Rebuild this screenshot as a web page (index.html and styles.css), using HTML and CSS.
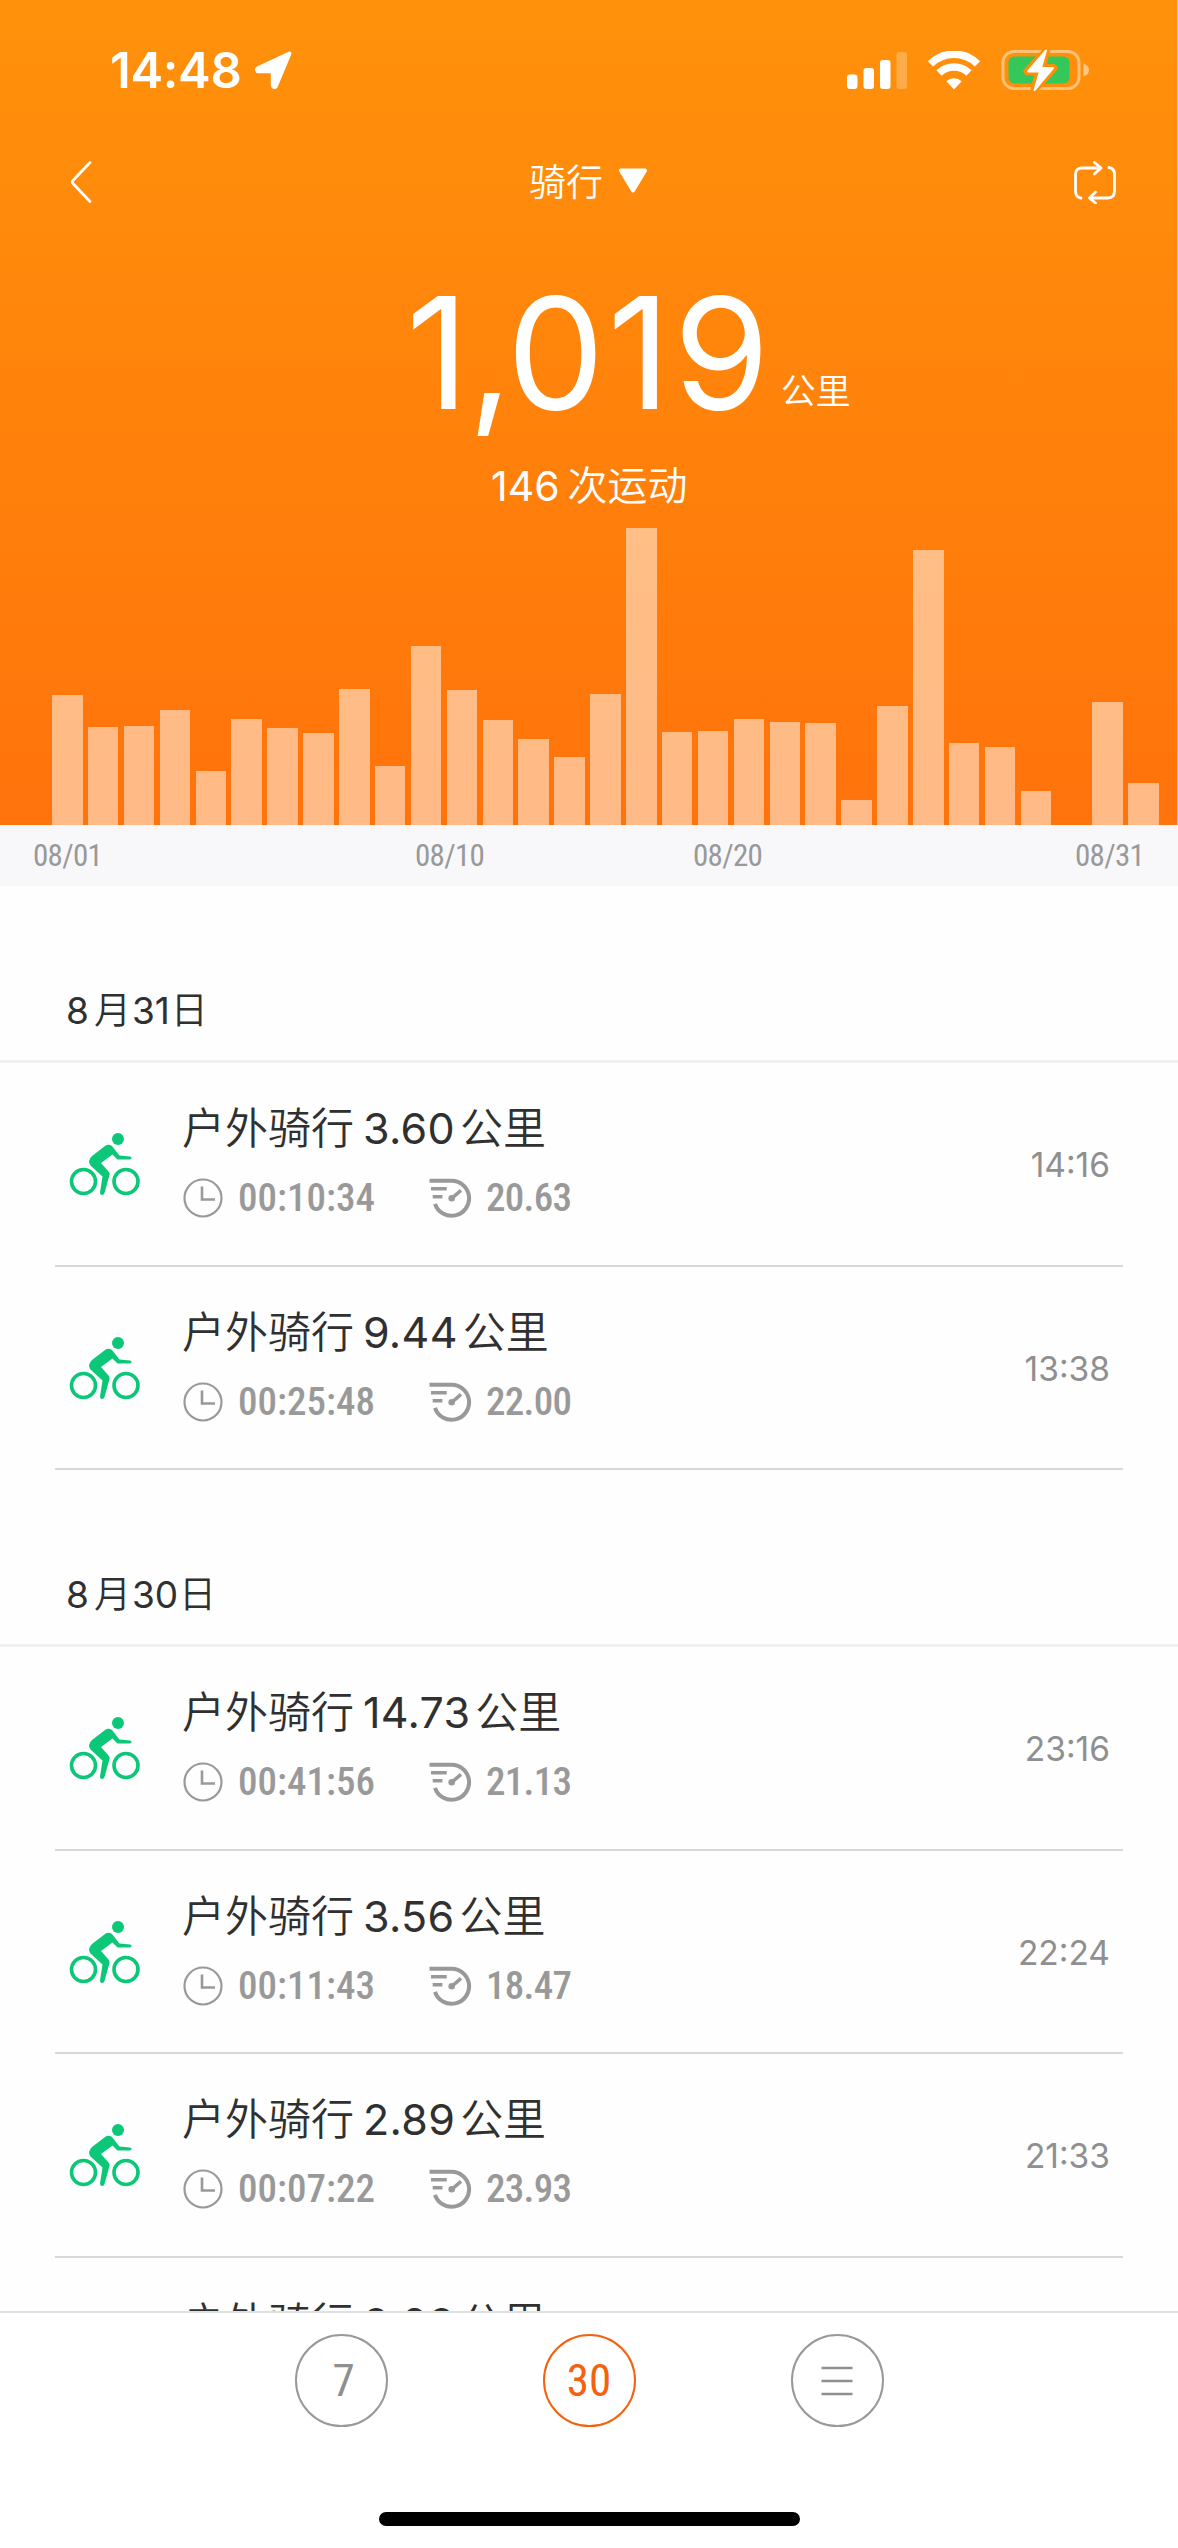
FILE: index.html
```html
<!DOCTYPE html>
<html lang="zh-CN">
<head>
<meta charset="utf-8">
<title>骑行</title>
<link rel="stylesheet" href="styles.css">
</head>
<body>
<div class="phone">
  <header class="hero">
    <div class="status">
      <span class="clock">14:48</span>
      <svg class="loc" width="40" height="40" viewBox="0 0 40 40"><path d="M35.5 3.5 3.8 18.2a1.6 1.6 0 0 0 .7 3h14.3v14.3a1.6 1.6 0 0 0 3 .7Z" fill="#fff" stroke="#fff" stroke-width="4" stroke-linejoin="round"/></svg>
      <span class="grow"></span>
      <svg class="signal" width="61" height="38" viewBox="0 0 61 38" fill="#fff"><rect x="0" y="23.500" width="10.500" height="14.500" rx="3"/><rect x="16.500" y="17" width="10.500" height="21" rx="3"/><rect x="33" y="9" width="10.500" height="29" rx="3"/><rect x="49.500" y="1" width="10.500" height="37" rx="3" opacity=".25"/></svg>
      <svg class="wifi" width="54" height="39" viewBox="0 0 54 39"><g fill="none" stroke="#fff" stroke-width="7.500"><path d="M3.500 12.800a33.500 33.500 0 0 1 47 0"/><path d="M12 22a21.500 21.500 0 0 1 30 0"/></g><path d="M19.300 30.200a11.500 11.500 0 0 1 15.400 0L27 38.500Z" fill="#fff"/></svg>
      <svg class="battery" width="88" height="44" viewBox="0 0 88 44"><rect x="2" y="3.500" width="76" height="37" rx="11" fill="none" stroke="#fff" stroke-opacity=".45" stroke-width="3"/><path d="M82.500 15.500q5.500 2 5.500 6.500t-5.500 6.500Z" fill="#fff" fill-opacity=".5"/><rect x="7.500" y="8.500" width="61" height="27" rx="6" fill="#34c759"/><path d="M45 3.500 26.500 23.500h12L33.500 41 52.500 20H40.500Z" fill="#ff8e0b" stroke="#ff8e0b" stroke-width="8" stroke-linejoin="round"/><path d="M45 2.500 27 23.500h12L33.500 42 52 20H40Z" fill="#fff" stroke="#fff" stroke-width="2" stroke-linejoin="round"/></svg>
    </div>
    <nav class="nav">
      <svg width="24" height="44" viewBox="0 0 24 44"><path d="M21 2.500 4.200 20.300q-1.700 1.700 0 3.400L21 41.500" fill="none" stroke="#fff" stroke-width="2.800" stroke-linecap="round"/></svg>
      <div class="nav-title">骑行<svg width="30" height="26" viewBox="0 0 30 26"><path d="M3 2.500h24L15 22.500Z" fill="#fff" stroke="#fff" stroke-width="4" stroke-linejoin="round"/></svg></div>
      <svg width="44" height="44" viewBox="0 0 44 44" fill="none" stroke="#fff" stroke-width="2.800" stroke-linecap="round" stroke-linejoin="round"><path d="M8 38.200Q2.500 37 2.500 31V14.500q0-6.500 6.500-6.500h19M21.500 2.500 28 8l-6.500 6M36 7.500q5.500 1 5.500 6.500v17q0 7-6.500 7H16.500M22.500 32l-6 6 6 5"/></svg>
    </nav>
    <div class="total"><span class="total-num">1<span class="comma">,</span>019</span><span class="total-unit">公里</span></div>
    <div class="count"><span class="count-num">146</span>次运动</div>
    <div class="chart">
      <i style="height:130px"></i><i style="height:98px"></i><i style="height:99px"></i><i style="height:115px"></i><i style="height:54px"></i><i style="height:106px"></i><i style="height:97px"></i><i style="height:92px"></i><i style="height:136px"></i><i style="height:59px"></i><i style="height:179px"></i><i style="height:135px"></i><i style="height:105px"></i><i style="height:86px"></i><i style="height:68px"></i><i style="height:131px"></i><i style="height:297px"></i><i style="height:93px"></i><i style="height:94px"></i><i style="height:106px"></i><i style="height:103px"></i><i style="height:102px"></i><i style="height:25px"></i><i style="height:119px"></i><i style="height:275px"></i><i style="height:82px"></i><i style="height:78px"></i><i style="height:34px"></i><i style="height:0"></i><i style="height:123px"></i><i style="height:42px"></i>
    </div>
  </header>
  <div class="axis din"><span>08/01</span><span>08/10</span><span>08/20</span><span>08/31</span></div>

  <svg class="defs" width="0" height="0">
    <symbol id="bike" viewBox="0 0 72 66"><g fill="none" stroke="#0bc777" stroke-width="3.600"><circle cx="14.500" cy="49.500" r="12"/><circle cx="57" cy="49.500" r="12"/></g><circle cx="49" cy="7" r="6" fill="#0bc777"/><path d="M43 14Q39.500 11.500 36 14L23 24q-5 5-1.500 9.500L33.500 44.500 31 60.500q0 2.500 2 2.500t2.500-2L40.500 43q.5-2-1-3.500L32 31 43.500 22.500 48.500 27.500H61q1.500-.3 1.500-1.600t-1.500-1.500L50.500 23.500Z" fill="#0bc777"/></symbol>
    <symbol id="time" viewBox="0 0 40 40"><g fill="none" stroke="#999" stroke-width="2.200"><circle cx="20" cy="20" r="18.500"/><path d="M19 8.500V21.500H32" stroke-width="2.600"/></g></symbol>
    <symbol id="speed" viewBox="0 0 44 40"><g fill="none" stroke="#999" stroke-width="4"><path d="M.5 2.800H22.500a17.500 17.500 0 1 1-16.500 23"/><path d="M2 10.800H17.700M3.700 18.700H13.400M22.700 20.300 32 12.300" stroke-width="3.500"/></g><circle cx="22.700" cy="20.300" r="3.300" fill="#999"/></symbol>
  </svg>

  <main class="list">
    <section>
      <h2>8<b>月</b>31<b class="day">日</b></h2>
      <article><svg class="bike"><use href="#bike"/></svg><div class="info"><h3>户外骑行<span>3.60</span>公里</h3><p class="din"><svg class="ic"><use href="#time"/></svg><span class="dur">00:10:34</span><svg class="ic2"><use href="#speed"/></svg><span class="pace">20.63</span></p></div><time>14:16</time></article>
      <article><svg class="bike"><use href="#bike"/></svg><div class="info"><h3>户外骑行<span>9.44</span>公里</h3><p class="din"><svg class="ic"><use href="#time"/></svg><span class="dur">00:25:48</span><svg class="ic2"><use href="#speed"/></svg><span class="pace">22.00</span></p></div><time>13:38</time></article>
    </section>
    <section>
      <h2>8<b>月</b>30<b class="day">日</b></h2>
      <article><svg class="bike"><use href="#bike"/></svg><div class="info"><h3>户外骑行<span>14.73</span>公里</h3><p class="din"><svg class="ic"><use href="#time"/></svg><span class="dur">00:41:56</span><svg class="ic2"><use href="#speed"/></svg><span class="pace">21.13</span></p></div><time>23:16</time></article>
      <article><svg class="bike"><use href="#bike"/></svg><div class="info"><h3>户外骑行<span>3.56</span>公里</h3><p class="din"><svg class="ic"><use href="#time"/></svg><span class="dur">00:11:43</span><svg class="ic2"><use href="#speed"/></svg><span class="pace">18.47</span></p></div><time>22:24</time></article>
      <article><svg class="bike"><use href="#bike"/></svg><div class="info"><h3>户外骑行<span>2.89</span>公里</h3><p class="din"><svg class="ic"><use href="#time"/></svg><span class="dur">00:07:22</span><svg class="ic2"><use href="#speed"/></svg><span class="pace">23.93</span></p></div><time>21:33</time></article>
      <article><div class="info last"><h3>户外骑行<span>2.02</span>公里</h3></div></article>
    </section>
  </main>

  <footer class="tabs">
    <div class="tab-row">
      <button class="tab din seven">7</button>
      <button class="tab din on">30</button>
      <button class="tab"><svg width="32" height="32" viewBox="0 0 32 32" stroke="#8f8f8f" stroke-width="2.600"><path d="M.5 3h31M.5 16h31M.5 29h31"/></svg></button>
    </div>
    <div class="home"></div>
  </footer>
</div>
</body>
</html>
```
FILE: styles.css
```css
* { box-sizing: border-box; }
body { margin: 0; background: #fff; font-family: Inter, "Noto Sans CJK SC", sans-serif; color: #303030; }
.phone { width: 1178px; height: 2548px; overflow: hidden; display: flex; flex-direction: column; background: #fefefe; }
.hero { height: 825px; flex: none; display: flex; flex-direction: column; color: #fff; background: linear-gradient(#ff920b, #ff730c); border-right: 1px solid #ffc080; }
.status { height: 140px; padding: 0 88px 0 110px; display: flex; align-items: center; }
.clock { font-size: 49px; font-weight: 600; letter-spacing: -.300px; }
.loc { margin-left: 13px; }
.grow { flex: 1; }
.wifi { margin-left: 20px; }
.signal { margin-right: -1px; }
.battery { margin-left: 20px; }
.nav { height: 84px; padding: 0 60px 0 69px; display: flex; align-items: center; justify-content: space-between; }
.nav-title { display: flex; align-items: center; gap: 15px; padding: 2px 0 0 11px; font-size: 37px; font-weight: 350; line-height: 48px; }
.nav-title svg { margin-bottom: 4px; }
.total { display: flex; align-items: baseline; height: 232px; padding-left: 406px; }
.total-num { font-size: 155px; line-height: 258px; letter-spacing: 3px; font-weight: 390; }
.comma { letter-spacing: -6px; margin-left: -4px; }
.total-unit { font-size: 35px; margin-left: 8px; font-weight: 350; line-height: 1; transform: translateY(-5px); }
.count { height: 60px; line-height: 60px; font-size: 40px; font-weight: 350; padding-left: 491px; display: flex; align-items: center; gap: 8px; }
.count-num { font-size: 41px; font-weight: 390; }
.chart { flex: 1; padding: 0 18px 0 52px; display: flex; align-items: flex-end; justify-content: space-between; }
.chart i { width: 30.600px; background: rgba(255, 255, 255, .5); }
.din { font-family: "Roboto Condensed", Roboto, sans-serif; font-stretch: 75%; color: #999; }
.axis { height: 61px; flex: none; background: #f8f8fb; font-size: 31px; font-weight: 450; letter-spacing: -.700px; line-height: 61px; display: grid; grid-template-columns: 382px 278px 382px 1fr; padding-left: 33px; }
.defs { display: block; height: 0; }
.list { height: 1425px; flex: none; overflow: hidden; }
h2 { margin: 0; height: 177px; padding: 75px 0 0 66px; border-bottom: 3px solid #f0f0f0; font-size: 37px; line-height: 100px; font-weight: 390; }
h2 b { font-weight: 350; margin: 0 1px 0 5px; }
h2 .day { margin: 0 0 0 1px; }
article { height: 203.600px; margin: 0 55px; border-bottom: 2px solid #d8d8d8; display: flex; }
.bike { width: 72px; height: 66px; margin: 69px 0 0 14px; }
.info { margin-left: 41px; flex: 1; }
.info.last { margin-left: 127px; }
h3 { margin: 33px 0 0; height: 64px; line-height: 64px; font-size: 43px; font-weight: 350; white-space: nowrap; }
h3 span { margin: 0 5px 0 9px; font-weight: 390; letter-spacing: .300px; }
article p { margin: 18px 0 0; height: 40px; display: flex; align-items: center; font-size: 39px; font-weight: 460; }
.ic { width: 40px; height: 40px; margin: 0 15px 0 1px; }
.dur { width: 191px; }
.ic2 { width: 44px; height: 40px; margin-right: 13px; }
.pace { letter-spacing: -.700px; }
time { margin: 81px 13px 0 0; font-size: 33.500px; font-weight: 390; line-height: 42px; color: #8f8f8f; }
.tabs { flex: 1; border-top: 2px solid #e0e0e0; background: #fff; display: flex; flex-direction: column; align-items: center; }
.tab-row { display: flex; gap: 155px; margin-top: 21px; }
.tab { width: 93px; height: 93px; border: 2px solid #999; border-radius: 50%; background: none; padding: 0; font-size: 45px; color: #8f8f8f; display: flex; align-items: center; justify-content: center; }
.seven { padding-left: 5px; }
.tab.on { color: #f5620f; border-color: #f5620f; }
.home { margin-top: 85px; width: 421px; height: 14px; border-radius: 7px; background: #000; }
```
